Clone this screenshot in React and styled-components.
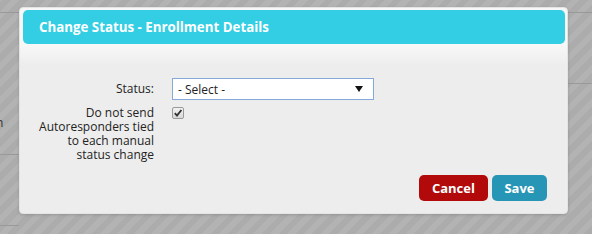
import React from 'react'
import styled, { createGlobalStyle } from 'styled-components'

const GlobalStyle = createGlobalStyle`
  html, body {
    margin: 0;
    padding: 0;
  }
  body {
    font-family: "Open Sans", "Liberation Sans", sans-serif;
  }
`

const App = () => {
  return (
    <>
      <GlobalStyle />
      <Page>
        <SideColumn>
          <PageRow height={13} />
          <PageRow height={142}>
            <CutText>n</CutText>
          </PageRow>
          <PageRow height={71} />
        </SideColumn>
        <MainColumn>
          <PageRow height={13} />
          <PageRow height={71} />
        </MainColumn>

        <Modal>
          <Header>
            <Title>Change Status - Enrollment Details</Title>
          </Header>
          <Form>
            <Label>Status:</Label>
            <SelectBox>
              <span>- Select -</span>
              <svg width="8" height="6" viewBox="0 0 8 6">
                <path d="M0 0 H8 L4 6 Z" fill="#111" />
              </svg>
            </SelectBox>

            <Label>
              Do not send
              <br />
              Autoresponders tied
              <br />
              to each manual
              <br />
              status change
            </Label>
            <div>
              <CheckBox>
                <svg width="10" height="10" viewBox="0 0 10 10">
                  <path d="M1.8 5.2 L4 7.6 L8.4 2" fill="none" stroke="#333" strokeWidth="1.9" />
                </svg>
              </CheckBox>
            </div>
          </Form>
          <Footer>
            <Button variant="cancel">Cancel</Button>
            <Button variant="save">Save</Button>
          </Footer>
        </Modal>
      </Page>
    </>
  )
}

const Page = styled.div`
  position: relative;
  width: 592px;
  height: 234px;
  overflow: hidden;
  display: flex;
  background-color: #acacac;
  background-image: repeating-linear-gradient(
    -45deg,
    #acacac 0px,
    #acacac 6px,
    #b3b3b3 6px,
    #b3b3b3 12px
  );
`

const SideColumn = styled.div`
  width: 19px;
  display: flex;
  flex-direction: column;
`

const MainColumn = styled.div`
  flex: 1;
  display: flex;
  flex-direction: column;
`

const PageRow = styled.div`
  height: ${(p) => p.height}px;
  flex-shrink: 0;
  border-bottom: 1px solid #999;
  box-sizing: border-box;
`

const CutText = styled.span`
  display: block;
  margin: 103px 0 0 -4px;
  font-size: 12px;
  line-height: 14px;
  color: #333;
`

const Modal = styled.div`
  position: absolute;
  left: 19px;
  top: 7px;
  width: 549px;
  box-sizing: border-box;
  padding: 2px 2px 12px 3px;
  border: 1px solid #e4e4e4;
  border-radius: 4px;
  background: linear-gradient(
    to bottom,
    #f7f7f7 0px,
    #f7f7f7 38px,
    #ededed 58px,
    #ededed 100%
  );
  box-shadow: 0 1px 3px rgba(0, 0, 0, 0.15);
`

const Header = styled.div`
  height: 34px;
  display: flex;
  align-items: center;
  padding-left: 16px;
  border-radius: 5px;
  background: #33cee4;
`

const Title = styled.h1`
  margin: 0;
  font-family: "Open Sans", "Liberation Sans", sans-serif;
  font-size: 13.3px;
  font-weight: 700;
  color: #fff;
`

const Form = styled.div`
  display: grid;
  grid-template-columns: 131px 202px;
  column-gap: 18px;
  row-gap: 6px;
  padding-top: 34px;
  align-items: start;
`

const Label = styled.div`
  text-align: right;
  font-size: 12px;
  line-height: 14px;
  color: #222;

  &:first-child {
    align-self: center;
  }
`

const SelectBox = styled.div`
  height: 22px;
  box-sizing: border-box;
  display: flex;
  align-items: center;
  justify-content: space-between;
  padding: 0 10px 0 5px;
  background: #fff;
  border: 1px solid #86a9dc;
  font-size: 12px;
  color: #222;

  svg {
    display: block;
  }
`

const CheckBox = styled.span`
  margin-top: 1px;
  width: 12px;
  height: 12px;
  box-sizing: border-box;
  display: flex;
  align-items: center;
  justify-content: center;
  border: 1px solid #9a9a9a;
  border-radius: 2px;
  background: linear-gradient(#f2f2f2, #d8d8d8);
`

const Footer = styled.div`
  display: flex;
  justify-content: flex-end;
  gap: 4px;
  margin-top: 13px;
  padding-right: 18px;
`

const Button = styled.button`
  height: 26px;
  padding: 0 ${(p) => (p.variant === 'cancel' ? 13 : 12.5)}px;
  border: none;
  border-radius: 5px;
  font-family: "Open Sans", "Liberation Sans", sans-serif;
  font-size: 13px;
  font-weight: 700;
  color: #fff;
  background: ${(p) => (p.variant === 'cancel' ? '#b20a0a' : '#2795b6')};
  cursor: pointer;
`

export default App
